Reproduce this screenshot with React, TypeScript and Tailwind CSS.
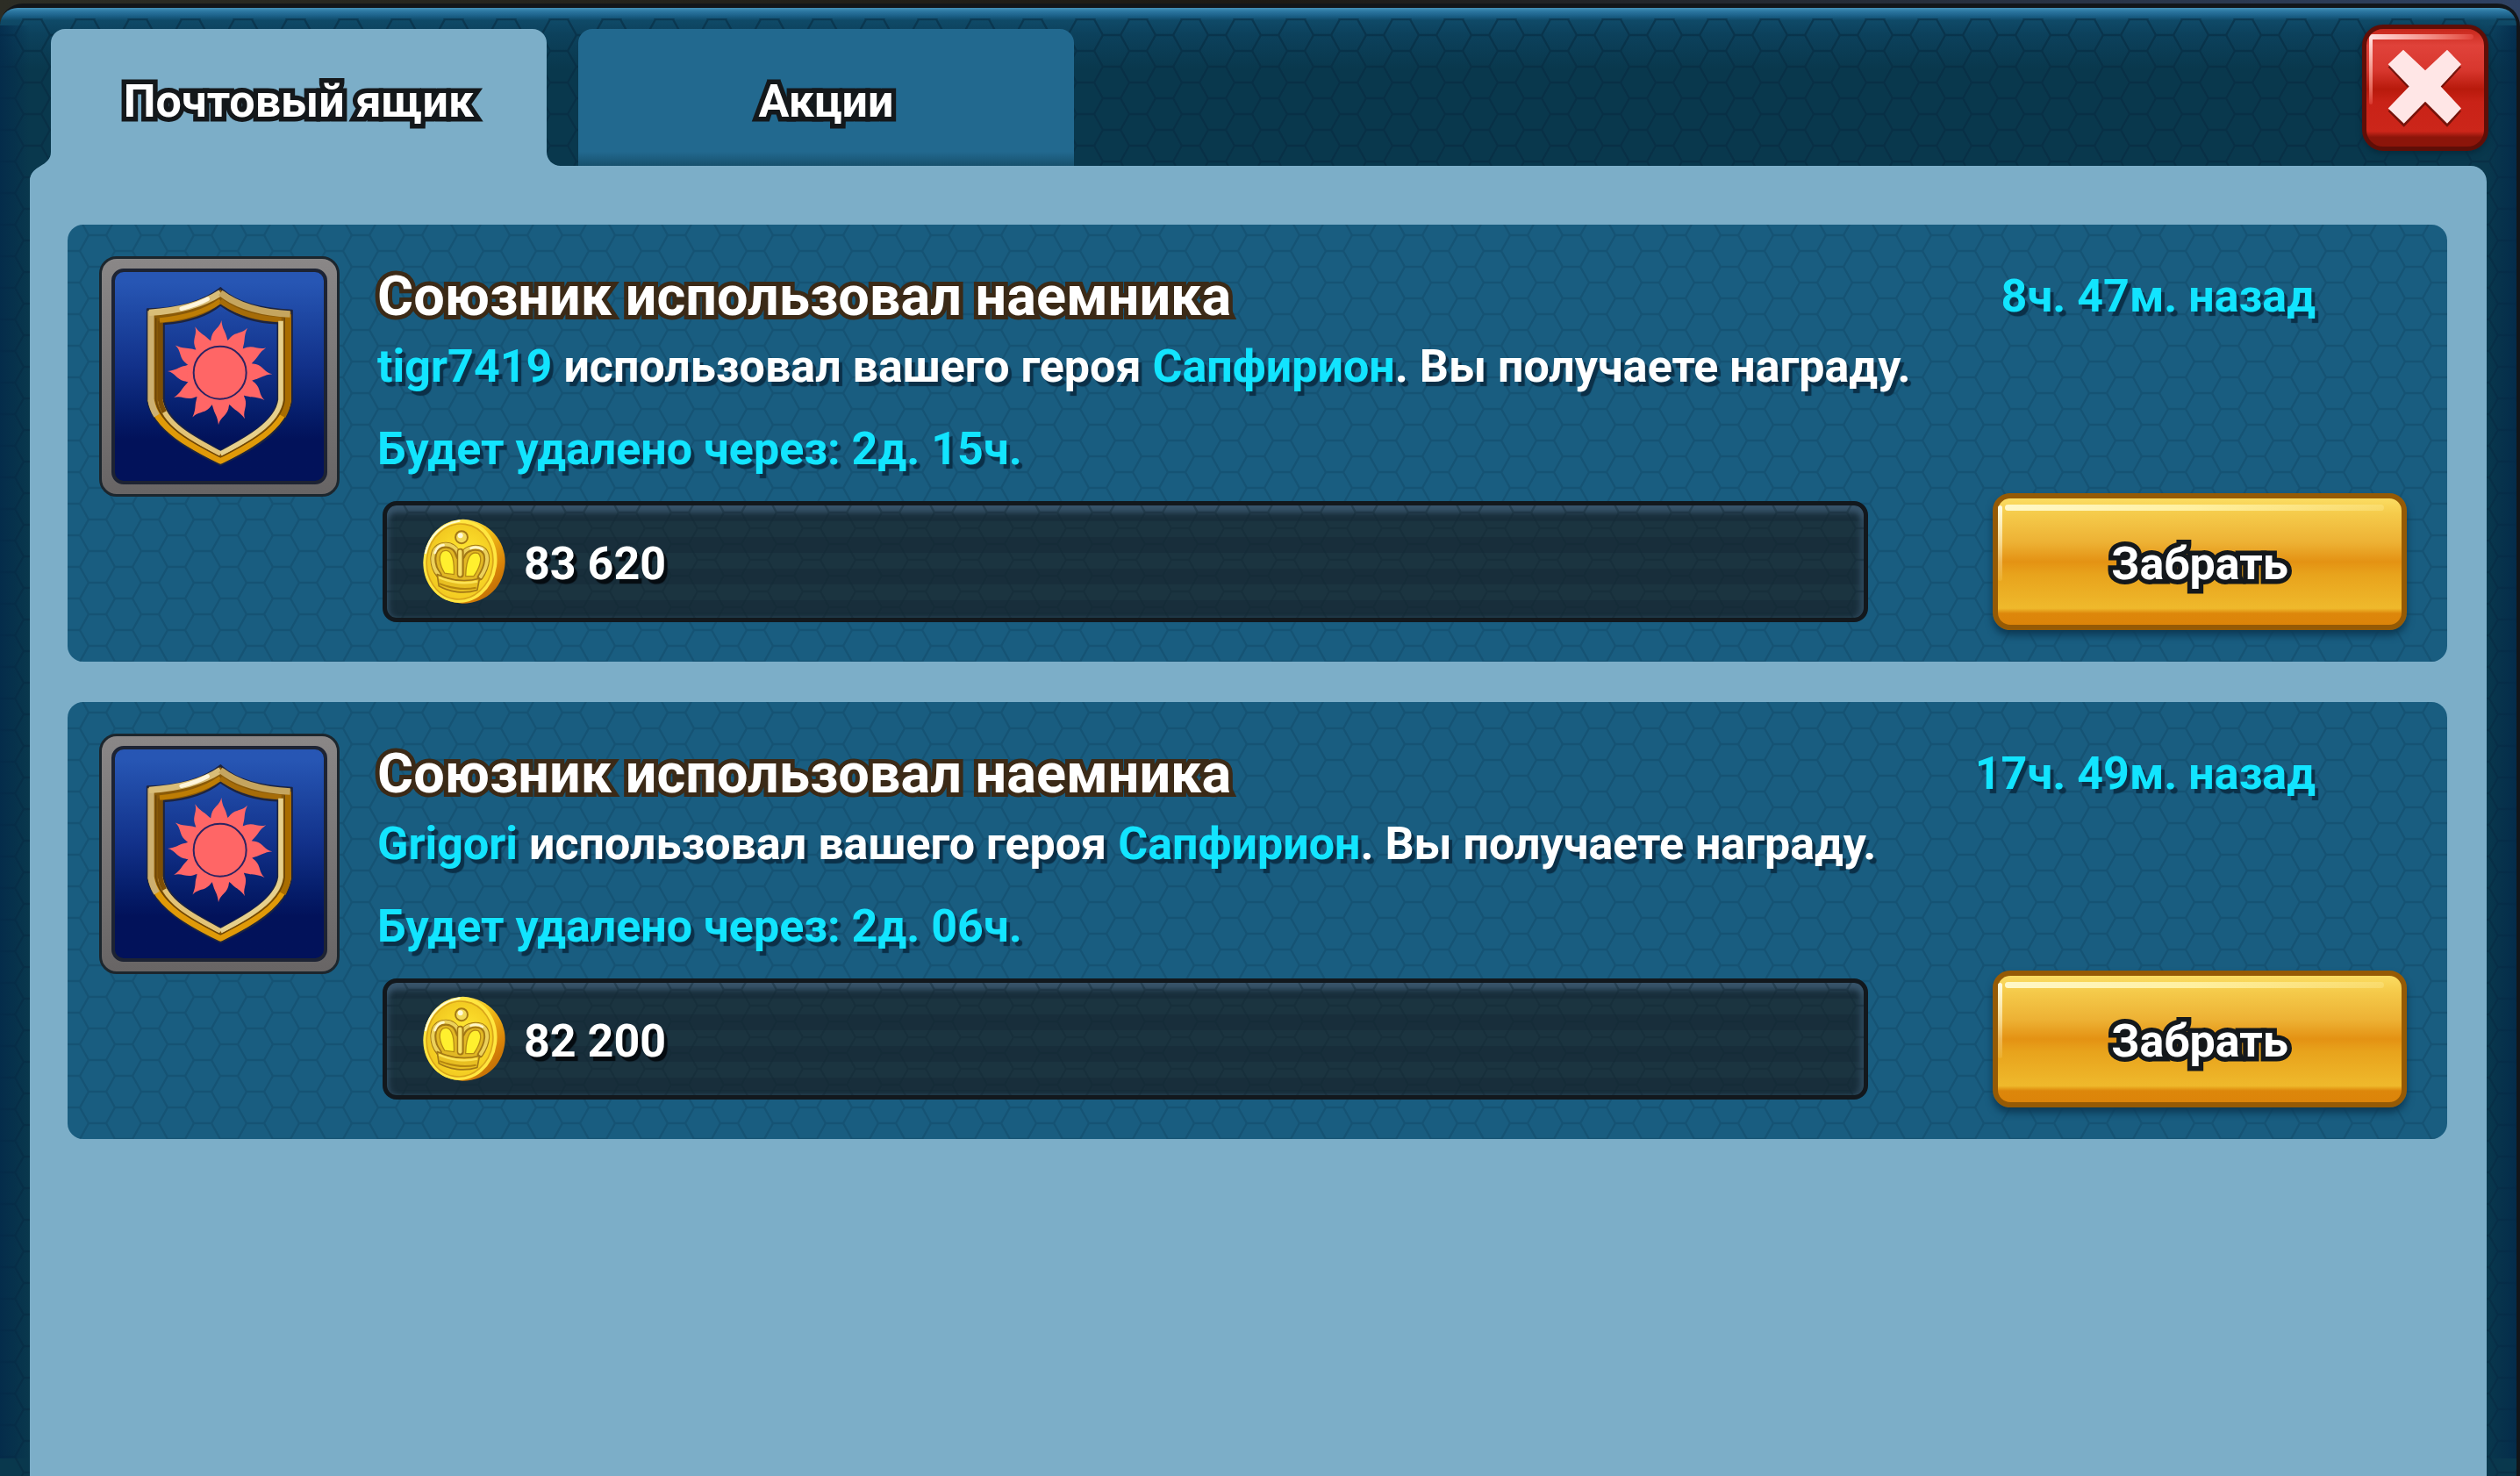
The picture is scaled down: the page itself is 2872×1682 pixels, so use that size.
import { useId, useState } from 'react'
import clsx from 'clsx'

type Message = {
  id: number
  player: string
  hero: string
  age: string
  expires: string
  gold: string
}

const messages: Message[] = [
  { id: 1, player: 'tigr7419', hero: 'Сапфирион', age: '8ч. 47м. назад', expires: '2д. 15ч.', gold: '83 620' },
  { id: 2, player: 'Grigori', hero: 'Сапфирион', age: '17ч. 49м. назад', expires: '2д. 06ч.', gold: '82 200' },
]

const tabs = ['Почтовый ящик', 'Акции']

const outlined = '[paint-order:stroke_fill] [-webkit-text-stroke:11px_#14181b] [text-shadow:0_2px_0_#14181b]'

function HexPattern({ x, y, className }: { x: number; y: number; className?: string }) {
  const id = useId()
  return (
    <svg className={clsx('pointer-events-none absolute inset-0 h-full w-full', className)} aria-hidden="true">
      <pattern id={id} x={x} y={y} width="60" height="36" patternUnits="userSpaceOnUse">
        <path
          d="M0 18H10L20 0H40L50 18H60M10 18L20 36H40L50 18"
          fill="none"
          stroke="currentColor"
          strokeWidth="2.5"
        />
      </pattern>
      <rect width="100%" height="100%" fill={`url(#${id})`} />
    </svg>
  )
}

function CloseIcon() {
  return (
    <svg viewBox="660 165 270 275" className="h-[92px] w-[90px]" aria-hidden="true">
      <path
        d="M720 185l75 68 75-68 48 47-70 76 70 75-48 54-75-77-73 77-54-54 72-75-72-76z"
        fill="#5a0d06"
        opacity=".75"
      />
      <path d="M720 173l75 70 75-70 48 49-70 76 70 75-48 52-75-75-73 75-54-52 72-75-72-76z" fill="#ffe6e6" />
    </svg>
  )
}

function ShieldEmblem() {
  return (
    <svg viewBox="225 168 510 624" className="h-[208px] w-[170px]" aria-hidden="true">
      {/* rim */}
      <path
        d="M484 178C430 222 340 250 234 250V560C250 662 380 734 484 782C590 734 710 668 728 560V255C620 250 530 225 484 178ZM484 235C540 276 610 296 680 298V560C670 636 570 690 484 735C400 690 300 636 290 560V300C360 295 430 280 484 235Z"
        fill="#8a5a08"
        stroke="#1d2440"
        strokeWidth="7"
        strokeLinejoin="round"
        fillRule="evenodd"
      />
      {/* outer bevel */}
      <g fill="none" strokeWidth="22" strokeLinejoin="round">
        <path d="M246 560C262 655 390 722 484 768C578 722 700 655 715 560" stroke="#e09a08" />
        <path d="M715 268V560C712 580 706 598 696 616" stroke="#a96d00" />
        <path d="M246 256V560C249 580 256 598 266 614" stroke="#cdb070" />
        <path d="M240 262C340 256 420 236 484 194" stroke="#d9bd78" />
        <path d="M484 194C540 238 620 262 722 267" stroke="#c5a55f" />
        <path d="M350 248C400 236 420 226 440 215" stroke="#fff6dc" strokeWidth="14" strokeLinecap="round" />
      </g>
      {/* inner bevel */}
      <g fill="none" strokeWidth="17" strokeLinejoin="round">
        <path d="M278 560C290 646 400 700 484 744" stroke="#e2c377" />
        <path d="M278 290V560C280 576 285 590 292 602" stroke="#7d4f06" />
        <path d="M276 288C360 280 430 260 484 222" stroke="#bd7d05" />
        <path d="M484 222C540 264 610 282 692 286" stroke="#a66c08" />
        <path d="M690 290V560C680 640 570 700 484 744" stroke="#e6d08c" />
      </g>
      <path
        d="M263 280V560C277 652 394 710 484 756C576 710 692 650 703 560V280"
        fill="none"
        stroke="#6b4407"
        strokeWidth="4"
      />
      <g fill="#ff6666">
        {[...Array(12)].map((_, i) => (
          <path
            key={i}
            transform={`rotate(${i * 30} 482 467)`}
            d="M440 385C450 372 450 356 453 344C460 318 482 314 487 288C490 318 500 326 504 342C507 352 508 362 530 385Z"
          />
        ))}
        <circle cx="482" cy="467" r="112" />
      </g>
      <circle cx="482" cy="467" r="90" fill="none" stroke="#2b2362" strokeWidth="6" />
    </svg>
  )
}

function CoinIcon() {
  const id = useId()
  return (
    <svg viewBox="184 120 290 296" className="relative h-[98px] w-[96px] shrink-0" aria-hidden="true">
      <defs>
        <linearGradient id={`${id}edge`} x1="0" y1="0" x2="1" y2="1">
          <stop offset="0" stopColor="#fff3a0" />
          <stop offset=".45" stopColor="#f3c61c" />
          <stop offset=".75" stopColor="#d98208" />
          <stop offset="1" stopColor="#a85a04" />
        </linearGradient>
        <radialGradient id={`${id}face`} cx=".55" cy=".5" r=".6">
          <stop offset="0" stopColor="#fff13c" />
          <stop offset=".6" stopColor="#f8d526" />
          <stop offset="1" stopColor="#efc41e" />
        </radialGradient>
      </defs>
      <path
        d="M325 122C420 128 470 200 470 268C468 350 410 412 322 412C240 408 188 350 188 272C190 190 245 124 325 122Z"
        fill={`url(#${id}edge)`}
      />
      <ellipse cx="316" cy="267" rx="126" ry="143" fill="#ffe640" transform="rotate(8 316 267)" />
      <ellipse
        cx="314"
        cy="268"
        rx="114"
        ry="130"
        fill={`url(#${id}face)`}
        stroke="#d9a51a"
        strokeWidth="5"
        transform="rotate(8 314 268)"
      />
      {/* crown */}
      <path
        d="M232 316C216 280 214 218 250 208C282 198 300 214 318 232C344 208 376 208 398 222C424 244 404 296 382 330C340 340 280 334 232 316Z"
        fill="#e2b824"
      />
      <g fill="#fff02e" stroke="#b58a14" strokeWidth="4">
        <path d="M262 308C244 280 238 246 256 232C280 222 296 246 294 312Z" />
        <path d="M362 318C382 290 394 256 378 240C352 230 336 254 334 318Z" />
      </g>
      <g fill="none" strokeLinecap="round">
        <path d="M242 314C216 280 214 224 252 213C284 206 304 224 310 250M384 322C408 286 418 240 388 224C356 214 330 228 322 250" stroke="#a37816" strokeWidth="21" />
        <path d="M240 312C214 280 212 223 251 211C284 204 306 222 311 246M386 320C410 284 419 239 389 222C356 212 330 226 322 246" stroke="#ecd15a" strokeWidth="12" />
        <path d="M228 238C234 220 244 212 258 211M352 222C368 216 380 218 392 226" stroke="#fff6c8" strokeWidth="8" />
        <path d="M316 234V312" stroke="#a37816" strokeWidth="24" />
        <path d="M315 234V312" stroke="#f6df66" strokeWidth="13" />
      </g>
      <path
        d="M236 312C284 334 336 338 382 326L374 366C330 380 280 374 242 352Z"
        fill="#e8bf22"
        stroke="#a37816"
        strokeWidth="5"
        strokeLinejoin="round"
      />
      <path d="M244 344C290 362 332 366 370 358" fill="none" stroke="#b5860f" strokeWidth="6" />
      <path d="M242 322C286 342 336 346 374 336" fill="none" stroke="#fbe254" strokeWidth="8" />
      <circle cx="320" cy="184" r="21" fill="#f3da58" stroke="#a37816" strokeWidth="6" />
      <circle cx="316" cy="178" r="9" fill="#fff9d8" />
      <path d="M196 238C210 180 250 138 312 128" fill="none" stroke="#fffbd0" strokeWidth="7" strokeLinecap="round" />
    </svg>
  )
}

function MessageCard({ message }: { message: Message }) {
  return (
    <li className="relative flex overflow-hidden rounded-[18px] bg-[#195d80] pt-9 pr-[46px] pb-9 pl-9">
      <HexPattern x={4} y={12} className="text-[#134d6d]/60" />
      <div className="relative size-[274px] shrink-0 rounded-[20px] border-[3px] border-[#1c262d] bg-[linear-gradient(#8a8787,#686565)] p-[11px]">
        <div className="flex h-full items-center justify-center rounded-[14px] border-4 border-[#1d2333] bg-linear-to-b from-[#2756b4] from-5% via-[#12318a] via-45% to-[#02125a] to-80%">
          <ShieldEmblem />
        </div>
      </div>
      <div className="relative min-w-0 flex-1 pt-1.5 pl-[43px] text-[52px] leading-[80px] font-bold text-white [text-shadow:4px_5px_1px_#0b3048]">
        <div className="flex h-20 items-center justify-between pr-[104px]">
          <h2 className="text-[63px] [paint-order:stroke_fill] [-webkit-text-stroke:10px_#3b2a17] [text-shadow:0_2px_0_#3b2a17]">
            Союзник использовал наемника
          </h2>
          <time className="text-[#12e4ff]">{message.age}</time>
        </div>
        <p>
          <span className="text-[#12e4ff]">{message.player}</span> использовал вашего героя{' '}
          <span className="text-[#12e4ff]">{message.hero}</span>. Вы получаете награду.
        </p>
        <p className="mt-3.5 text-[#12e4ff]">Будет удалено через: {message.expires}</p>
        <div className="mt-2.5 flex items-center gap-[142px] pl-[6px]">
          <div className="relative flex h-[138px] flex-1 items-center gap-5 overflow-hidden rounded-[16px] border-[5px] border-[#12181d] bg-[repeating-linear-gradient(#182e3b_0_18px,#1b3440_18px_36px)] pl-10 shadow-[inset_0_10px_6px_-2px_#38546a,inset_5px_0_6px_-2px_#2c4658,inset_-7px_0_6px_-2px_#2c4658]">
            <HexPattern x={4} y={8} className="text-[#122834]/40" />
            <CoinIcon />
            <span className="relative pt-1.5 [text-shadow:4px_5px_1px_#050b10]">{message.gold}</span>
          </div>
          <button
            type="button"
            className="relative h-[156px] w-[472px] rounded-[20px] border-[6px] border-[#955a05] bg-[linear-gradient(#fbdc62_0%,#f5cb4b_12%,#edb134_35%,#e49213_50%,#e8a31c_60%,#efb92c_87%,#dd870b_91%,#dc8409_100%)] pt-1.5 leading-[80px] shadow-[0_6px_8px_#0d3a55]"
          >
            <span className="absolute top-[7px] right-5 left-2 h-[7px] rounded-full bg-linear-to-r from-[#fff8c8] via-[#fff0a0] to-[#fff0a0]/30" />
            <span className="absolute top-2 left-0 h-[86px] w-[5px] rounded-full bg-linear-to-b from-[#fffbe0] to-[#f8d060]/20" />
            <span className={clsx('relative', outlined)}>Забрать</span>
          </button>
        </div>
      </div>
    </li>
  )
}

export default function App() {
  const [active, setActive] = useState(0)

  return (
    <div className="flex h-screen flex-col overflow-hidden bg-linear-to-r from-[#2c2d25] via-[#1d1a14] to-[#2f4263] pt-1 font-[Roboto,'Open_Sans',sans-serif]">
      <div className="flex min-h-0 flex-1 flex-col rounded-t-[26px] bg-[#12161a] pt-[5px] pr-1">
        <main className="relative flex min-h-0 flex-1 flex-col overflow-hidden rounded-t-[20px] bg-[linear-gradient(#4390b8_0,#2b76a0_4px,#1c6189_9px,#0f4a68_14px,#0c415c_30px,#09384d_70px)]">
          <HexPattern x={-23} y={-5} className="text-[#062b41]/60 [clip-path:inset(12px_0_0_0)]" />
          <div className="pointer-events-none absolute inset-y-5 left-0 w-[34px] bg-linear-to-r from-[#03294a]/80 to-transparent" />
          <div className="pointer-events-none absolute inset-y-5 right-0 w-[34px] bg-linear-to-l from-[#03294a]/80 to-transparent" />

          <header className="relative flex items-end justify-between pt-[19px] pr-8 pl-[58px]">
            <div role="tablist" className="flex gap-9 self-end pt-[5px]">
              {tabs.map((tab, i) => (
                <button
                  key={tab}
                  type="button"
                  role="tab"
                  aria-selected={i === active}
                  onClick={() => setActive(i)}
                  className={clsx(
                    'relative flex h-[156px] w-[565px] items-center justify-center rounded-t-[16px] pt-2.5 text-[52px] leading-[80px] font-bold text-white',
                    i === active
                      ? 'bg-[#7caec8]'
                      : 'bg-[linear-gradient(#22698f_0,#22698f_calc(100%-16px),#17516d_100%)]',
                  )}
                >
                  <span className={outlined}>{tab}</span>
                  {i === active && (
                    <>
                      <svg viewBox="0 0 24 34" className="absolute top-[140px] -left-6 h-[34px] w-6" aria-hidden="true">
                        <path d="M24 0C24 18 0 14 0 34H24Z" fill="#7caec8" />
                      </svg>
                      <svg viewBox="0 0 16 16" className="absolute -right-4 bottom-0 size-4" aria-hidden="true">
                        <path d="M0 0C0 9 7 16 16 16H0Z" fill="#7caec8" />
                      </svg>
                    </>
                  )}
                </button>
              ))}
            </div>
            <button
              type="button"
              aria-label="Закрыть"
              className="relative mb-[17px] flex size-[144px] items-center justify-center rounded-[24px] border-[5px] border-[#5f0e07] bg-[linear-gradient(#c8281c_0,#e0423a_14%,#d8372e_35%,#b81a0c_51%,#c92217_62%,#cc261a_87%,#8c150a_92%,#8c150a_100%)] shadow-[0_3px_6px_#062b3d]"
            >
              <span className="absolute top-[6px] right-3 left-1 h-[6px] rounded-full bg-linear-to-r from-[#ffdede] via-[#f59a94] to-[#e0423a]" />
              <span className="absolute top-2 left-[3px] h-[78px] w-1 rounded-full bg-linear-to-b from-[#ffe4e4] to-[#d8372e]" />
              <CloseIcon />
            </button>
          </header>

          <section className="relative mr-[34px] ml-[34px] min-h-0 flex-1 rounded-t-[18px] bg-[#7caec8] pt-[67px] pr-[45px] pl-[43px]">
            <ul className="flex flex-col gap-[46px]">
              {messages.map((message) => (
                <MessageCard key={message.id} message={message} />
              ))}
            </ul>
          </section>
        </main>
      </div>
    </div>
  )
}
